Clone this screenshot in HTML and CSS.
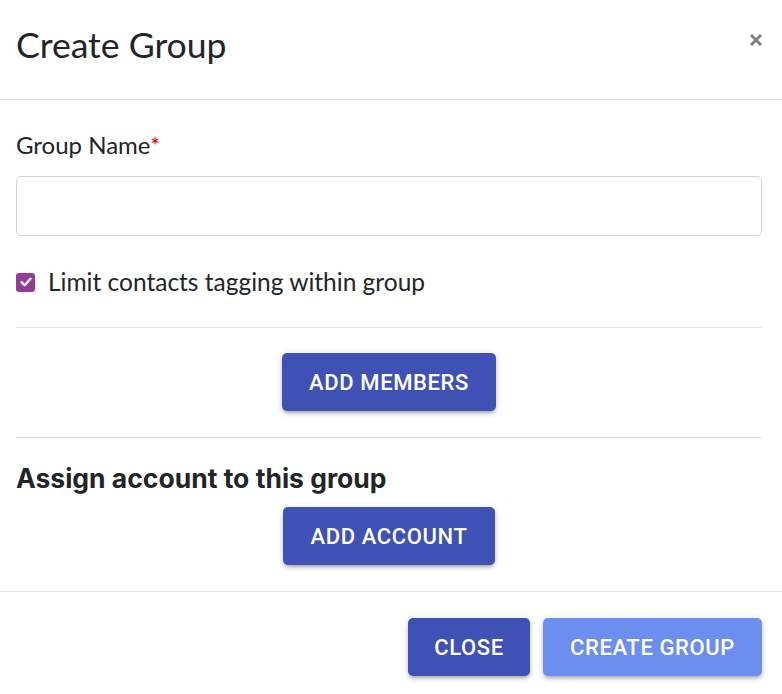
FILE: index.html
```html
<!DOCTYPE html>
<html>
<head>
<meta charset="utf-8">
<link rel="stylesheet" href="styles.css">
</head>
<body>
<div class="modal">
  <div class="modal-header">
    <h1 class="title">Create Group</h1>
    <button class="close-x" aria-label="close">
      <svg width="12" height="12" viewBox="0 0 12 12"><path d="M2 2 L10 10 M10 2 L2 10" stroke="#808080" stroke-width="3" stroke-linecap="square"/></svg>
    </button>
  </div>
  <div class="modal-body">
    <label class="label">Group Name<span class="req">*</span></label>
    <input class="input" type="text">
    <label class="check-row">
      <span class="checkbox">
        <svg width="14" height="14" viewBox="0 0 14 14"><path d="M2.5 7.2 L5.6 10.2 L11.5 3.8" fill="none" stroke="#fff" stroke-width="2.4" stroke-linecap="round" stroke-linejoin="round"/></svg>
      </span>
      <span class="check-text">Limit contacts tagging within group</span>
    </label>
    <hr class="divider">
    <div class="center">
      <button class="btn btn-members">ADD MEMBERS</button>
    </div>
    <hr class="divider">
    <h2 class="section-title">Assign account to this group</h2>
    <div class="center">
      <button class="btn btn-account">ADD ACCOUNT</button>
    </div>
  </div>
  <div class="modal-footer">
    <button class="btn btn-close">CLOSE</button>
    <button class="btn btn-create">CREATE GROUP</button>
  </div>
</div>
</body>
</html>
```
FILE: styles.css
```css
html, body {
  margin: 0;
  padding: 0;
  background: #fff;
}
body {
  font-family: "Lato", "Open Sans", sans-serif;
  color: #212529;
}
.modal {
  width: 782px;
  height: 694px;
  display: flex;
  flex-direction: column;
}
.modal-header {
  height: 100px;
  border-bottom: 1px solid #dee2e6;
  display: flex;
  align-items: center;
  justify-content: space-between;
  padding: 0 20px 10px 16px;
  box-sizing: border-box;
}
.title {
  margin: 0;
  font-weight: 400;
  font-size: 35.6px;
  letter-spacing: 0;
  color: #212529;
}
.close-x {
  border: none;
  background: none;
  padding: 0;
  margin-top: -10px;
  cursor: pointer;
  display: flex;
}
.modal-body {
  padding: 29px 20px 0 16px;
  display: flex;
  flex-direction: column;
}
.label {
  font-size: 24px;
  line-height: 32px;
  color: #212529;
}
.req { color: #f00; }
.input {
  margin-top: 15px;
  height: 60px;
  box-sizing: border-box;
  border: 1px solid #ced4da;
  border-radius: 5px;
  width: 100%;
}
.check-row {
  display: flex;
  align-items: center;
  margin-top: 31px;
  gap: 13px;
}
.checkbox {
  width: 19px;
  height: 19px;
  border-radius: 3px;
  background: #933b98;
  display: flex;
  align-items: center;
  justify-content: center;
}
.check-text {
  font-size: 24.5px;
  line-height: 30px;
}
.divider {
  border: none;
  border-top: 1px solid #dee2e6;
  margin: 0;
  width: 100%;
}
.check-row + .divider { margin-top: 30px; }
.center {
  display: flex;
  justify-content: center;
}
.btn {
  font-family: "Roboto", sans-serif;
  font-weight: 500;
  font-size: 22px;
  letter-spacing: 0.6px;
  color: #fff;
  border: none;
  border-radius: 5px;
  height: 58px;
  padding: 0 20px;
  background: #3f51b5;
  box-shadow: 0 3px 3px -2px rgba(0,0,0,0.2), 0 3px 4px 0 rgba(0,0,0,0.14), 0 1px 8px 0 rgba(0,0,0,0.12);
  cursor: pointer;
}
.btn-members { margin: 25px 0 26px; width: 214px; }
.section-title {
  margin: 25px 0 0;
  font-family: "Inter", sans-serif;
  font-weight: 700;
  font-size: 26.5px;
  line-height: 30px;
  color: #212529;
}
.btn-account { margin-top: 14px; width: 212px; }
.modal-footer {
  margin-top: 26px;
  border-top: 1px solid #dee2e6;
  display: flex;
  justify-content: flex-end;
  gap: 13px;
  padding: 26px 20px 0 0;
}
.btn-close { width: 122px; }
.btn-create { width: 219px; background: #6b8eef; }
```
